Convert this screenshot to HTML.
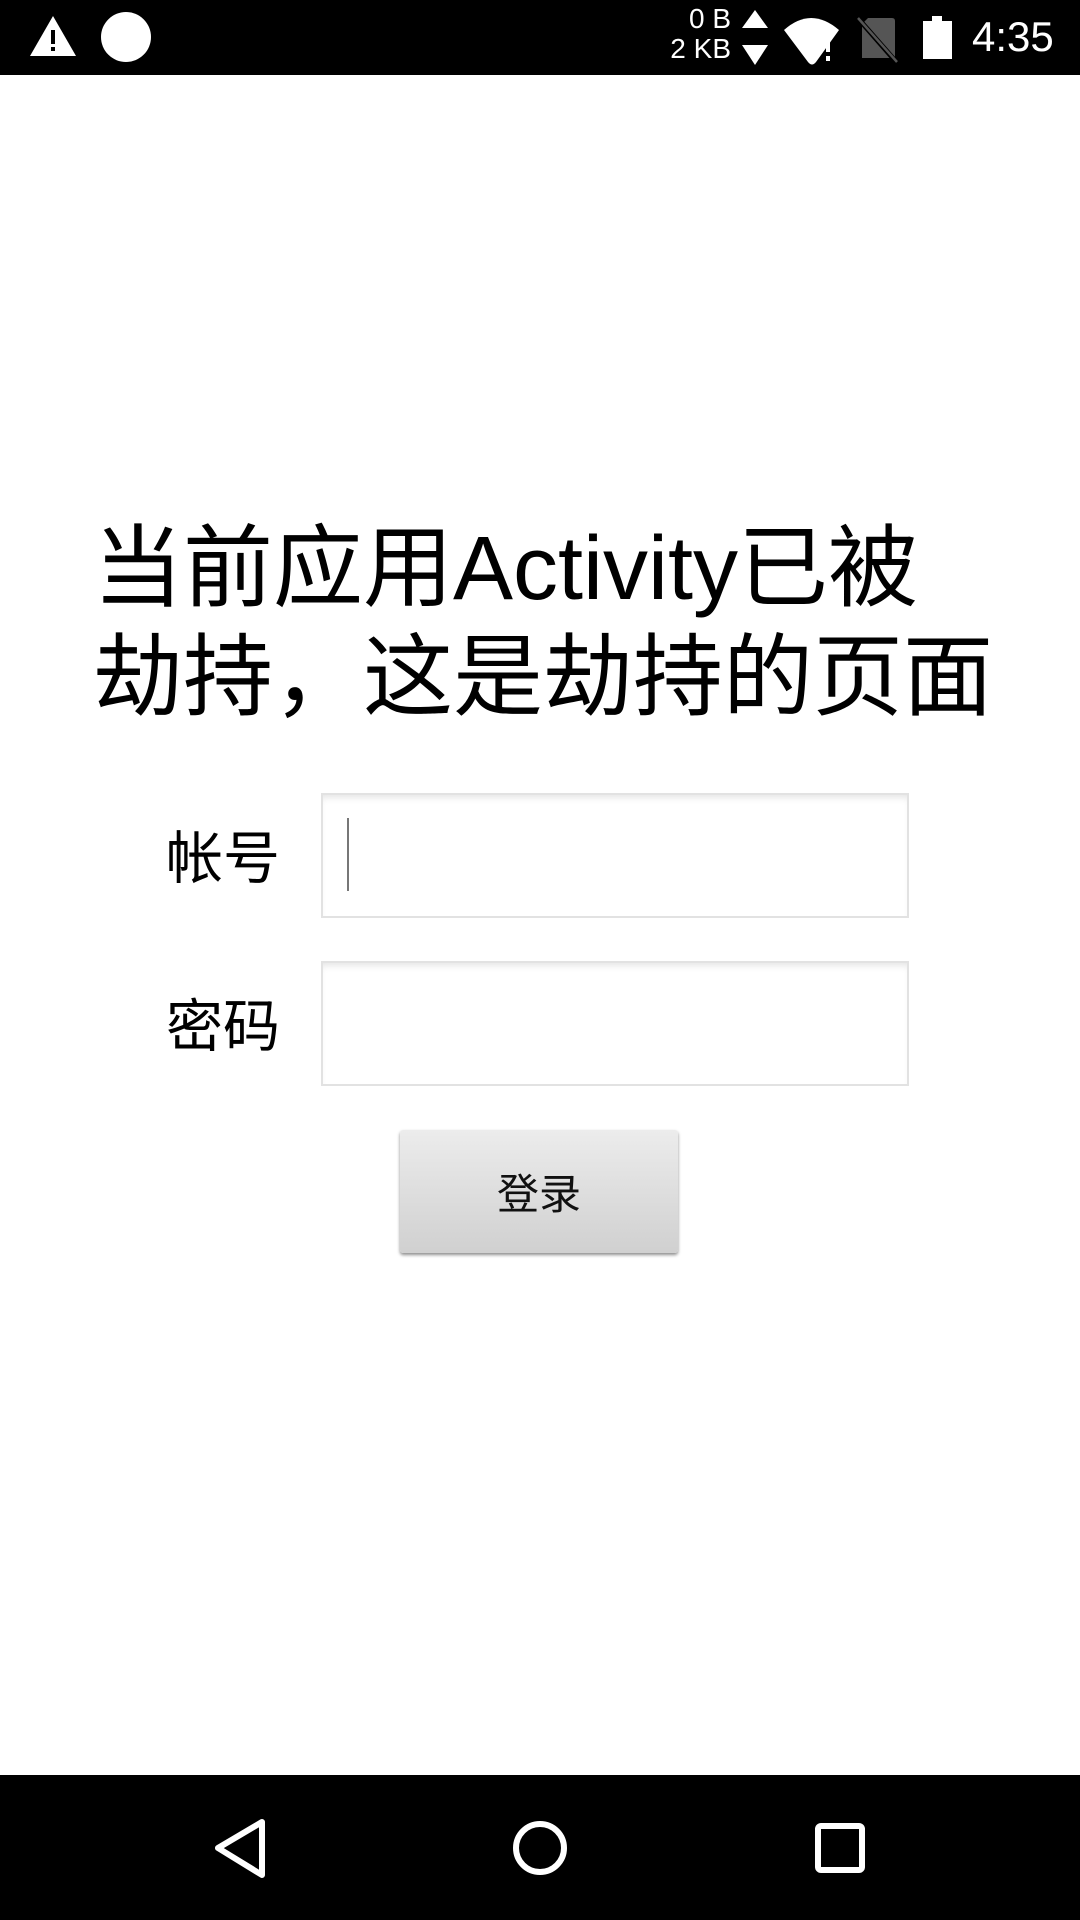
<!DOCTYPE html>
<html><head><meta charset="utf-8"><style>
body{margin:0;width:1080px;height:1920px;position:relative;background:#fff;overflow:hidden;font-family:"Liberation Sans","Noto Sans CJK SC",sans-serif;}
.abs{position:absolute}
.sb{left:0;top:0;width:1080px;height:75px;background:#000}
.nb{left:0;top:1775px;width:1080px;height:145px;background:#000}
.title{left:93px;font-size:90px;line-height:104px;height:104px;color:#000;white-space:nowrap;font-family:"Noto Sans CJK SC",sans-serif}
.title .l{font-family:"Liberation Sans",sans-serif}
.lbl{font-size:57px;color:#000;font-family:"Noto Sans CJK SC",sans-serif;line-height:1}
.inp{left:321px;width:588px;height:125px;border:2px solid #e2e2e2;background:#fff;box-shadow:inset 0 6px 8px -4px rgba(0,0,0,0.12);box-sizing:border-box}
.btn{left:400px;top:1130px;width:278px;height:123px;border-radius:3px;background:linear-gradient(#ececec,#d0d0d0);box-shadow:0 2px 3px rgba(0,0,0,0.45);text-align:center;line-height:123px;font-size:42px;font-family:"Noto Sans CJK SC",sans-serif;color:#111}
</style></head><body>
<div class="abs sb">
<svg class="abs" style="left:0;top:0" width="1080" height="75">
<path d="M53 16 L76 56 L30 56 Z" fill="#fff"/>
<rect x="51" y="30" width="4" height="14" fill="#000"/><rect x="51" y="47" width="4" height="4" fill="#000"/>
<ellipse cx="126" cy="37" rx="25" ry="25" fill="#fff"/>
<path d="M755 10 L768 28 L742 28 Z" fill="#fff"/>
<path d="M742 45 L768 45 L755 65 Z" fill="#fff"/>
<path d="M784 30 Q811 6 839 30 L816 62 Q812 67 808 62 Z" fill="#fff"/>
<rect x="826" y="34" width="4" height="18" fill="#fff"/><rect x="826" y="56" width="4" height="5" fill="#fff"/>
<path d="M868 18 L892 18 Q895 18 895 21 L895 58 L862 58 L862 24 Z" fill="#555"/>
<path d="M856 16 L898 64" stroke="#000" stroke-width="5"/><path d="M858 18 L897 62" stroke="#555" stroke-width="2.5"/>
<rect x="932" y="16" width="10" height="5" fill="#fff"/><rect x="923" y="21" width="29" height="38" fill="#fff"/>
</svg>
<div class="abs" style="right:349px;top:4px;color:#fff;font-size:28px;line-height:30px;text-align:right">0 B<br>2 KB</div>
<div class="abs" style="left:972px;top:12px;color:#fff;font-size:42px;line-height:50px">4:35</div>
</div>
<div class="abs title" style="top:508px">当前应用<span class="l">Activity</span>已被</div>
<div class="abs title" style="top:617px">劫持，这是劫持的页面</div>
<div class="abs lbl" style="left:166px;top:826px">帐号</div>
<div class="abs lbl" style="left:166px;top:994px">密码</div>
<div class="abs inp" style="top:793px"></div>
<div class="abs" style="left:347px;top:818px;width:2px;height:73px;background:#777"></div>
<div class="abs inp" style="top:961px"></div>
<div class="abs btn">登录</div>
<div class="abs nb">
<svg class="abs" style="left:0;top:0" width="1080" height="145">
<path d="M262 47 L262 100 L218 73 Z" fill="none" stroke="#fff" stroke-width="6" stroke-linejoin="round"/>
<circle cx="540" cy="73" r="24" fill="none" stroke="#fff" stroke-width="6"/>
<rect x="818" y="51" width="44" height="44" rx="3" fill="none" stroke="#fff" stroke-width="6"/>
</svg>
</div>
</body></html>
